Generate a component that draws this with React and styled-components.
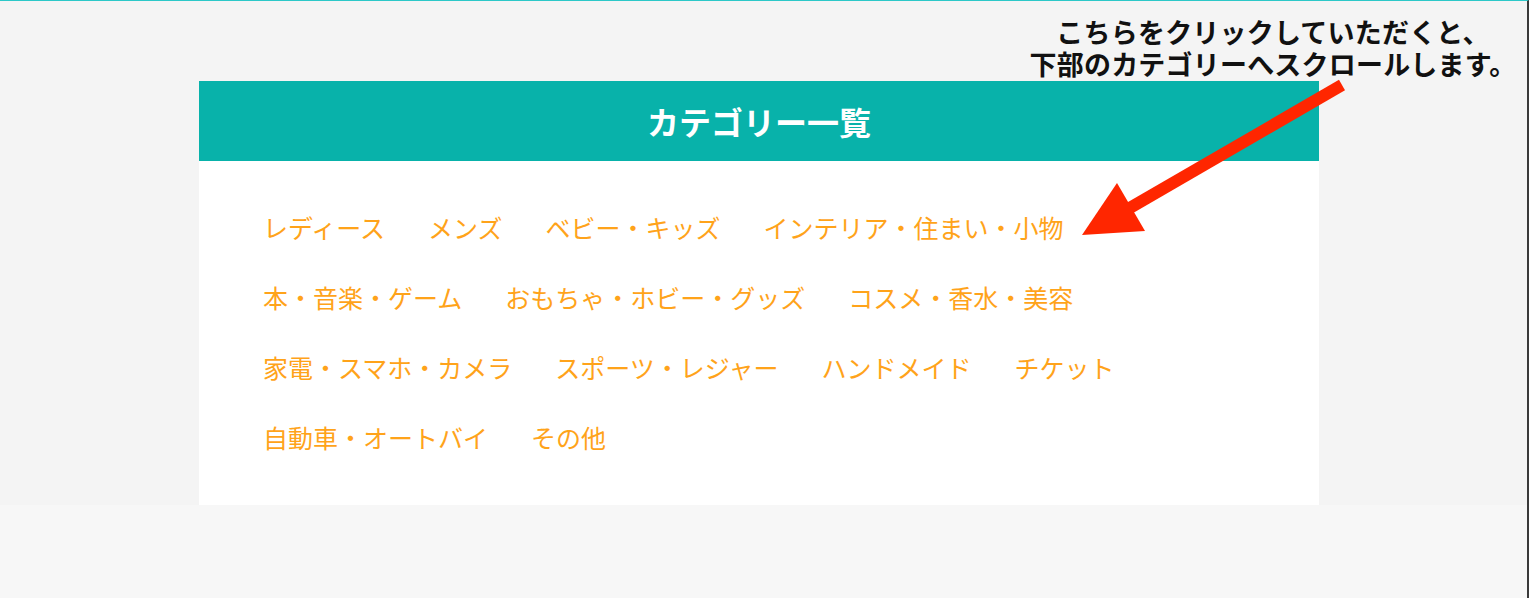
import React from "react";
import styled, { createGlobalStyle } from "styled-components";

const categories = [
  "レディース",
  "メンズ",
  "ベビー・キッズ",
  "インテリア・住まい・小物",
  "本・音楽・ゲーム",
  "おもちゃ・ホビー・グッズ",
  "コスメ・香水・美容",
  "家電・スマホ・カメラ",
  "スポーツ・レジャー",
  "ハンドメイド",
  "チケット",
  "自動車・オートバイ",
  "その他",
];

const GlobalStyle = createGlobalStyle`
  html, body {
    margin: 0;
    padding: 0;
    background: #ffffff;
  }
  body {
    font-family: "Noto Sans CJK JP", "Noto Sans", sans-serif;
    overflow: hidden;
  }
`;

export default function App() {
  return (
    <>
      <GlobalStyle />
      <Page>
        <Upper>
          <Card>
            <CardHeader>
              <Title>カテゴリー一覧</Title>
            </CardHeader>
            <CardBody>
              <List>
                {categories.map((c) => (
                  <CategoryLink key={c} href="#">
                    {c}
                  </CategoryLink>
                ))}
              </List>
            </CardBody>
          </Card>
        </Upper>
        <Lower />

        {/* annotation over the screenshot */}
        <Note>
          <NoteLine>こちらをクリックしていただくと、</NoteLine>
          <NoteLine>下部のカテゴリーへスクロールします。</NoteLine>
        </Note>
        <Arrow width="290" height="170" viewBox="0 0 290 170">
          <line
            x1="272"
            y1="10"
            x2="58"
            y2="134"
            stroke="#ff2600"
            strokeWidth="12"
          />
          <polygon points="12,160 47,108 75,156" fill="#ff2600" />
        </Arrow>
      </Page>
    </>
  );
}

const Page = styled.div`
  position: relative;
  width: 1527px;
  height: 597px;
  border-top: 1px solid #2cc8c8;
  border-right: 2px solid #3a3a3a;
  background: #f7f7f7;
`;

const Upper = styled.div`
  background: #f4f4f4;
  padding-top: 80px;
`;

const Lower = styled.div`
  height: 93px;
  background: #f7f7f7;
`;

const Card = styled.section`
  width: 1120px;
  margin-left: 199px;
`;

const CardHeader = styled.div`
  height: 80px;
  background: #08b2aa;
  display: flex;
  align-items: center;
  justify-content: center;
`;

const Title = styled.h2`
  margin: 0;
  color: #ffffff;
  font-size: 32px;
  font-weight: 700;
  line-height: 1;
`;

const CardBody = styled.div`
  background: #ffffff;
  padding: 31px 65px 33px 64px;
`;

const List = styled.div`
  display: flex;
  flex-wrap: wrap;
  column-gap: 43px;
`;

const CategoryLink = styled.a`
  color: #ffa31a;
  font-size: 25px;
  line-height: 70px;
  text-decoration: none;
  white-space: nowrap;
`;

const Note = styled.div`
  position: absolute;
  top: 15px;
  left: 1029px;
  width: 488px;
  text-align: center;
  color: #111111;
  font-size: 27px;
  font-weight: 700;
  letter-spacing: 0.2px;
  white-space: nowrap;
`;

const NoteLine = styled.div`
  line-height: 32px;
`;

const Arrow = styled.svg`
  position: absolute;
  left: 1070px;
  top: 74px;
`;
